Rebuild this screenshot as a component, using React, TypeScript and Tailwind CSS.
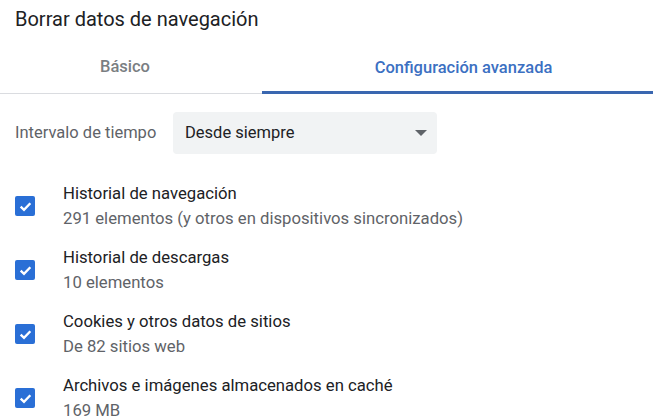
import React from "react";

const items = [
  { title: "Historial de navegación", sub: "291 elementos (y otros en dispositivos sincronizados)" },
  { title: "Historial de descargas", sub: "10 elementos" },
  { title: "Cookies y otros datos de sitios", sub: "De 82 sitios web" },
  { title: "Archivos e imágenes almacenados en caché", sub: "169 MB" },
];

const CheckBox = () => (
  <div className="w-[20px] h-[20px] rounded-[2px] bg-[#2a6fd6] flex items-center justify-center shrink-0">
    <svg width="15" height="15" viewBox="0 0 14 14">
      <path d="M2.5 7.2 L5.6 10.2 L11.5 4" stroke="#fff" strokeWidth="2.2" fill="none" />
    </svg>
  </div>
);

export default function App() {
  return (
    <div className="w-[653px] h-[417px] bg-white overflow-hidden font-['Roboto',sans-serif]">
      {/* Title */}
      <h1 className="pl-[15px] pt-[6px] h-[42px] text-[20px] leading-[27px] text-[#202124]">
        Borrar datos de navegación
      </h1>

      {/* Tabs */}
      <div className="flex border-b border-[#dadce0] h-[52px]">
        <div className="w-[250px] flex items-center justify-center text-[16.5px] font-medium text-[#7a7e82]">
          Básico
        </div>
        <div className="ml-[12px] flex-1 flex items-center justify-center text-[16.5px] font-medium text-[#3b70c2] border-b-[3px] border-[#3a67b0] pt-[3px] pl-[12px] mb-[-1px]">
          Configuración avanzada
        </div>
      </div>

      {/* Time range */}
      <div className="flex items-center pl-[15px] mt-[18px] h-[42px]">
        <span className="text-[16.5px] text-[#5f6368] w-[158px]">Intervalo de tiempo</span>
        <div className="w-[264px] h-[42px] rounded-[4px] bg-[#f1f3f4] flex items-center justify-between pl-[12px] pr-[10px]">
          <span className="text-[16.5px] text-[#202124]">Desde siempre</span>
          <svg width="12" height="6" viewBox="0 0 12 6">
            <path d="M0 0 L12 0 L6 6 Z" fill="#5f6368" />
          </svg>
        </div>
      </div>

      {/* Items */}
      <div className="flex flex-col mt-[20px]">
        {items.map((it) => (
          <div key={it.title} className="flex items-center h-[64px] pl-[15px]">
            <CheckBox />
            <div className="ml-[28px] flex flex-col">
              <span className="text-[16.7px] leading-[25px] text-[#202124]">{it.title}</span>
              <span className="text-[16.7px] leading-[25px] text-[#5f6368]">{it.sub}</span>
            </div>
          </div>
        ))}
      </div>
    </div>
  );
}
